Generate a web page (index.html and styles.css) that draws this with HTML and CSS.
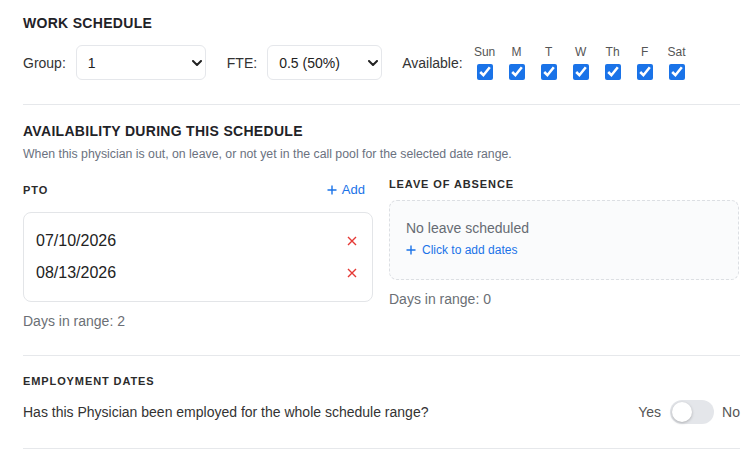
FILE: index.html
```html
<!DOCTYPE html>
<html>
<head>
	<title>Work Schedule</title>
	<link rel="stylesheet" href="styles.css">
</head>
<body>
	<div class="page">

		<!-- Work schedule -->
		<section class="section">
			<h2 class="section-title">WORK SCHEDULE</h2>
			<div class="schedule-row">
				<label class="field-label">Group:</label>
				<div class="select-wrap group-select">
					<select class="select">
						<option>1</option>
						<option>2</option>
					</select>
					<svg class="chevron" width="10" height="6" viewBox="0 0 10 6"><path d="M1 1l4 4 4-4" fill="none" stroke="#222" stroke-width="2" stroke-linecap="round" stroke-linejoin="round"/></svg>
				</div>
				<label class="field-label fte-label">FTE:</label>
				<div class="select-wrap fte-select">
					<select class="select">
						<option>0.5 (50%)</option>
						<option>1.0 (100%)</option>
					</select>
					<svg class="chevron" width="10" height="6" viewBox="0 0 10 6"><path d="M1 1l4 4 4-4" fill="none" stroke="#222" stroke-width="2" stroke-linecap="round" stroke-linejoin="round"/></svg>
				</div>
				<label class="field-label avail-label">Available:</label>
				<div class="days">
					<label class="day"><span>Sun</span><input type="checkbox" checked></label>
					<label class="day"><span>M</span><input type="checkbox" checked></label>
					<label class="day"><span>T</span><input type="checkbox" checked></label>
					<label class="day"><span>W</span><input type="checkbox" checked></label>
					<label class="day"><span>Th</span><input type="checkbox" checked></label>
					<label class="day"><span>F</span><input type="checkbox" checked></label>
					<label class="day"><span>Sat</span><input type="checkbox" checked></label>
				</div>
			</div>
		</section>

		<!-- Availability -->
		<section class="section">
			<h2 class="section-title">AVAILABILITY DURING THIS SCHEDULE</h2>
			<p class="section-sub">When this physician is out, on leave, or not yet in the call pool for the selected date range.</p>

			<div class="columns">
				<div class="col">
					<div class="col-head">
						<h3 class="small-title">PTO</h3>
						<button class="link-btn" type="button">
							<svg width="10" height="10" viewBox="0 0 10 10"><path d="M5 0.5v9M0.5 5h9" stroke="#1a73e8" stroke-width="1.4"/></svg>
							Add
						</button>
					</div>
					<div class="date-box">
						<div class="date-row">
							<span>07/10/2026</span>
							<button class="remove" type="button"><svg width="10" height="10" viewBox="0 0 10 10"><path d="M1 1l8 8M9 1l-8 8" stroke="#e53935" stroke-width="1.4"/></svg></button>
						</div>
						<div class="date-row">
							<span>08/13/2026</span>
							<button class="remove" type="button"><svg width="10" height="10" viewBox="0 0 10 10"><path d="M1 1l8 8M9 1l-8 8" stroke="#e53935" stroke-width="1.4"/></svg></button>
						</div>
					</div>
					<p class="days-count">Days in range: 2</p>
				</div>

				<div class="col">
					<h3 class="small-title loa-title">LEAVE OF ABSENCE</h3>
					<div class="empty-box">
						<p class="empty-text">No leave scheduled</p>
						<a class="add-dates" href="#">
							<svg width="10" height="10" viewBox="0 0 10 10"><path d="M5 0.5v9M0.5 5h9" stroke="#1a73e8" stroke-width="1.4"/></svg>
							Click to add dates
						</a>
					</div>
					<p class="days-count">Days in range: 0</p>
				</div>
			</div>
		</section>

		<!-- Employment -->
		<section class="section">
			<h3 class="small-title emp-title">EMPLOYMENT DATES</h3>
			<div class="emp-row">
				<span class="question">Has this Physician been employed for the whole schedule range?</span>
				<div class="toggle-group">
					<span>Yes</span>
					<span class="toggle"><span class="knob"></span></span>
					<span>No</span>
				</div>
			</div>
		</section>

	</div>
</body>
</html>
```

FILE: styles.css
```css
body { margin: 0; background: #ffffff; font-family: "Liberation Sans", Arial, sans-serif; color: #333333; }
.page { padding: 0 12px 0 23px; }

.section { border-bottom: 1px solid #e6e8eb; padding: 17px 0 24px 0; }
.section:first-child { padding-top: 14px; }

.section-title { margin: 0; font-size: 14px; line-height: 18px; font-weight: bold; letter-spacing: 0.3px; color: #1f2328; }
.section-sub { margin: 6px 0 0 0; font-size: 12.3px; line-height: 16px; color: #6b7280; }
.small-title { margin: 0; font-size: 11px; line-height: 16px; font-weight: bold; letter-spacing: 0.9px; color: #2b2b2b; }

/* Work schedule row */
.schedule-row { display: flex; align-items: center; margin-top: 13px; }
.field-label { font-size: 14px; color: #333333; margin-right: 10px; }
.fte-label { margin-left: 21px; }
.avail-label { margin-left: 20px; margin-right: 6px; }

.select-wrap { position: relative; }
.select {
    appearance: none;
    -webkit-appearance: none;
    height: 35px;
    border: 1px solid #e5e7eb;
    border-radius: 6px;
    background: #ffffff;
    padding: 0 24px 0 11px;
    font-family: "Liberation Sans", Arial, sans-serif;
    font-size: 14px;
    color: #222222;
    box-sizing: border-box;
}
.group-select .select { width: 130px; }
.fte-select .select { width: 115px; }
.chevron { position: absolute; top: 15px; right: 4px; pointer-events: none; }

.days { display: flex; }
.day { width: 32px; display: flex; flex-direction: column; align-items: center; gap: 5px; }
.day span { font-size: 12px; line-height: 14px; color: #555555; }
.day input { width: 16px; height: 16px; margin: 0; accent-color: #1a73e8; }

/* Availability columns */
.columns { display: grid; grid-template-columns: 350px 350px; column-gap: 16px; margin-top: 14px; }
.col-head { display: flex; align-items: center; justify-content: space-between; height: 28px; margin-bottom: 8px; }
.loa-title { margin-bottom: 8px; }

.link-btn {
    display: flex;
    align-items: center;
    gap: 5px;
    border: none;
    background: none;
    padding: 6px 8px;
    font-family: "Liberation Sans", Arial, sans-serif;
    font-size: 13px;
    line-height: 16px;
    color: #1a73e8;
    cursor: pointer;
}

.date-box { border: 1px solid #e3e5e8; border-radius: 8px; padding: 12px; }
.date-row { display: flex; align-items: center; justify-content: space-between; height: 32px; font-size: 16px; color: #222222; }
.remove { border: none; background: none; padding: 3px; display: flex; cursor: pointer; }

.empty-box {
    border: 1px dashed #dcdfe3;
    border-radius: 8px;
    background: #fafbfc;
    padding: 17px 16px 0 16px;
    height: 80px;
    box-sizing: border-box;
}
.empty-text { margin: 0; font-size: 14px; line-height: 20px; color: #666b73; }
.add-dates { display: flex; align-items: center; gap: 6px; margin-top: 4px; font-size: 12px; line-height: 16px; color: #1a73e8; text-decoration: none; }

.days-count { margin: 9px 0 0 0; font-size: 14px; line-height: 20px; color: #6b6f75; }

/* Employment */
.emp-title { margin-bottom: 11px; }
.emp-row { display: flex; align-items: center; justify-content: space-between; }
.question { font-size: 14px; color: #333333; }
.toggle-group { display: flex; align-items: center; gap: 9px; font-size: 14px; color: #555555; }
.toggle { position: relative; width: 44px; height: 24px; border-radius: 12px; background: #e4e6ea; display: block; margin-right: -1px; }
.knob { position: absolute; top: 2px; left: 2px; width: 20px; height: 20px; border-radius: 50%; background: #ffffff; box-shadow: 0 1px 3px rgba(0, 0, 0, 0.25); }
```
